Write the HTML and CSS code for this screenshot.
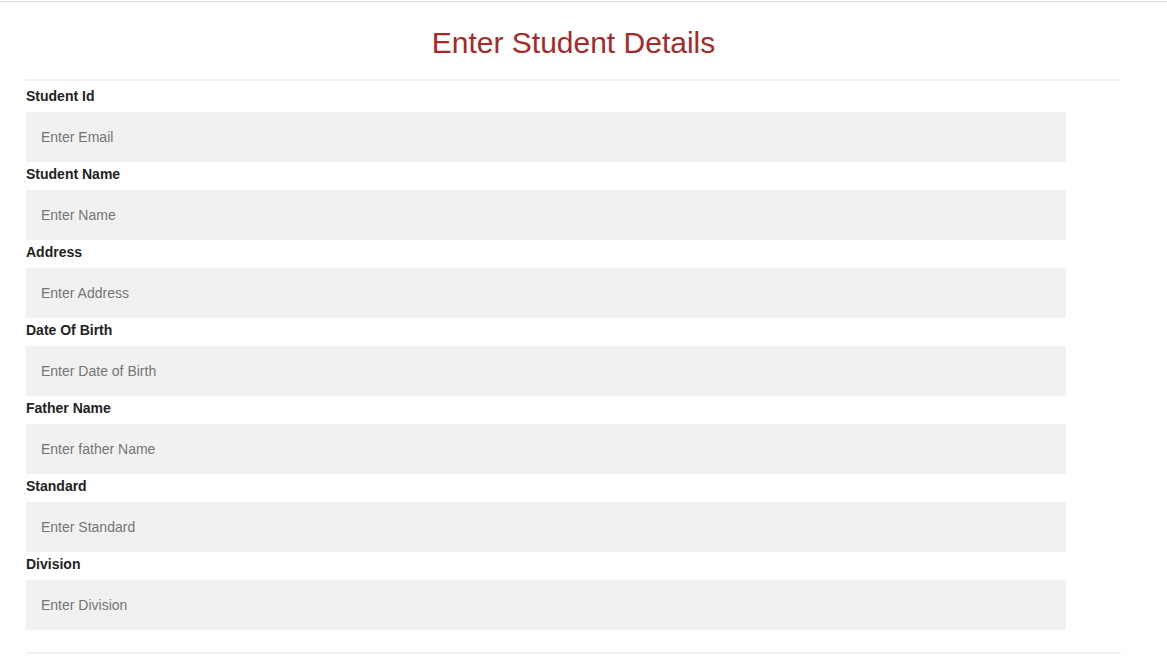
FILE: index.html
```html
<!DOCTYPE html>
<html>
<head>
<meta charset="utf-8">
<title>Enter Student Details</title>
<link rel="stylesheet" href="styles.css">
</head>
<body>
<div class="topline"></div>
<form class="container">
  <h1 class="title">Enter Student Details</h1>
  <hr class="rule">
  <label class="lbl" for="sid">Student Id</label>
  <input class="field" id="sid" type="text" placeholder="Enter Email">
  <label class="lbl" for="sname">Student Name</label>
  <input class="field" id="sname" type="text" placeholder="Enter Name">
  <label class="lbl" for="addr">Address</label>
  <input class="field" id="addr" type="text" placeholder="Enter Address">
  <label class="lbl" for="dob">Date Of Birth</label>
  <input class="field" id="dob" type="text" placeholder="Enter Date of Birth">
  <label class="lbl" for="fname">Father Name</label>
  <input class="field" id="fname" type="text" placeholder="Enter father Name">
  <label class="lbl" for="std">Standard</label>
  <input class="field" id="std" type="text" placeholder="Enter Standard">
  <label class="lbl" for="div">Division</label>
  <input class="field" id="div" type="text" placeholder="Enter Division">
  <hr class="rule rule-bottom">
</form>
</body>
</html>
```
FILE: styles.css
```css
html, body {
  margin: 0;
  padding: 0;
  background: #ffffff;
  font-family: "Liberation Sans", Arial, sans-serif;
}

.topline {
  margin-top: 1px;
  height: 1px;
  background: #dadada;
}

.container {
  display: flex;
  flex-direction: column;
  align-items: flex-start;
  width: 1095px;
  margin: 0 0 0 26px;
  padding: 0;
}

.title {
  align-self: stretch;
  margin: 24px 0 0 0;
  font-size: 30px;
  font-weight: normal;
  line-height: 34px;
  text-align: center;
  color: #a52a2a;
}

.rule {
  align-self: stretch;
  margin: 19px 0 0 0;
  border: none;
  height: 2px;
  background: #f1f1f1;
}

.rule-bottom {
  margin-top: 22px;
}

.lbl {
  display: block;
  margin: 7px 0 8px 0;
  font-size: 14px;
  line-height: 16px;
  font-weight: bold;
  color: #222222;
}

.field + .lbl {
  margin-top: 4px;
}

.field {
  box-sizing: border-box;
  width: 1040px;
  height: 50px;
  margin: 0;
  padding: 0 15px;
  border: none;
  background: #f1f1f1;
  font-family: "Liberation Sans", Arial, sans-serif;
  font-size: 14px;
  color: #333;
  outline: none;
}

.field::placeholder {
  color: #757575;
}
```
